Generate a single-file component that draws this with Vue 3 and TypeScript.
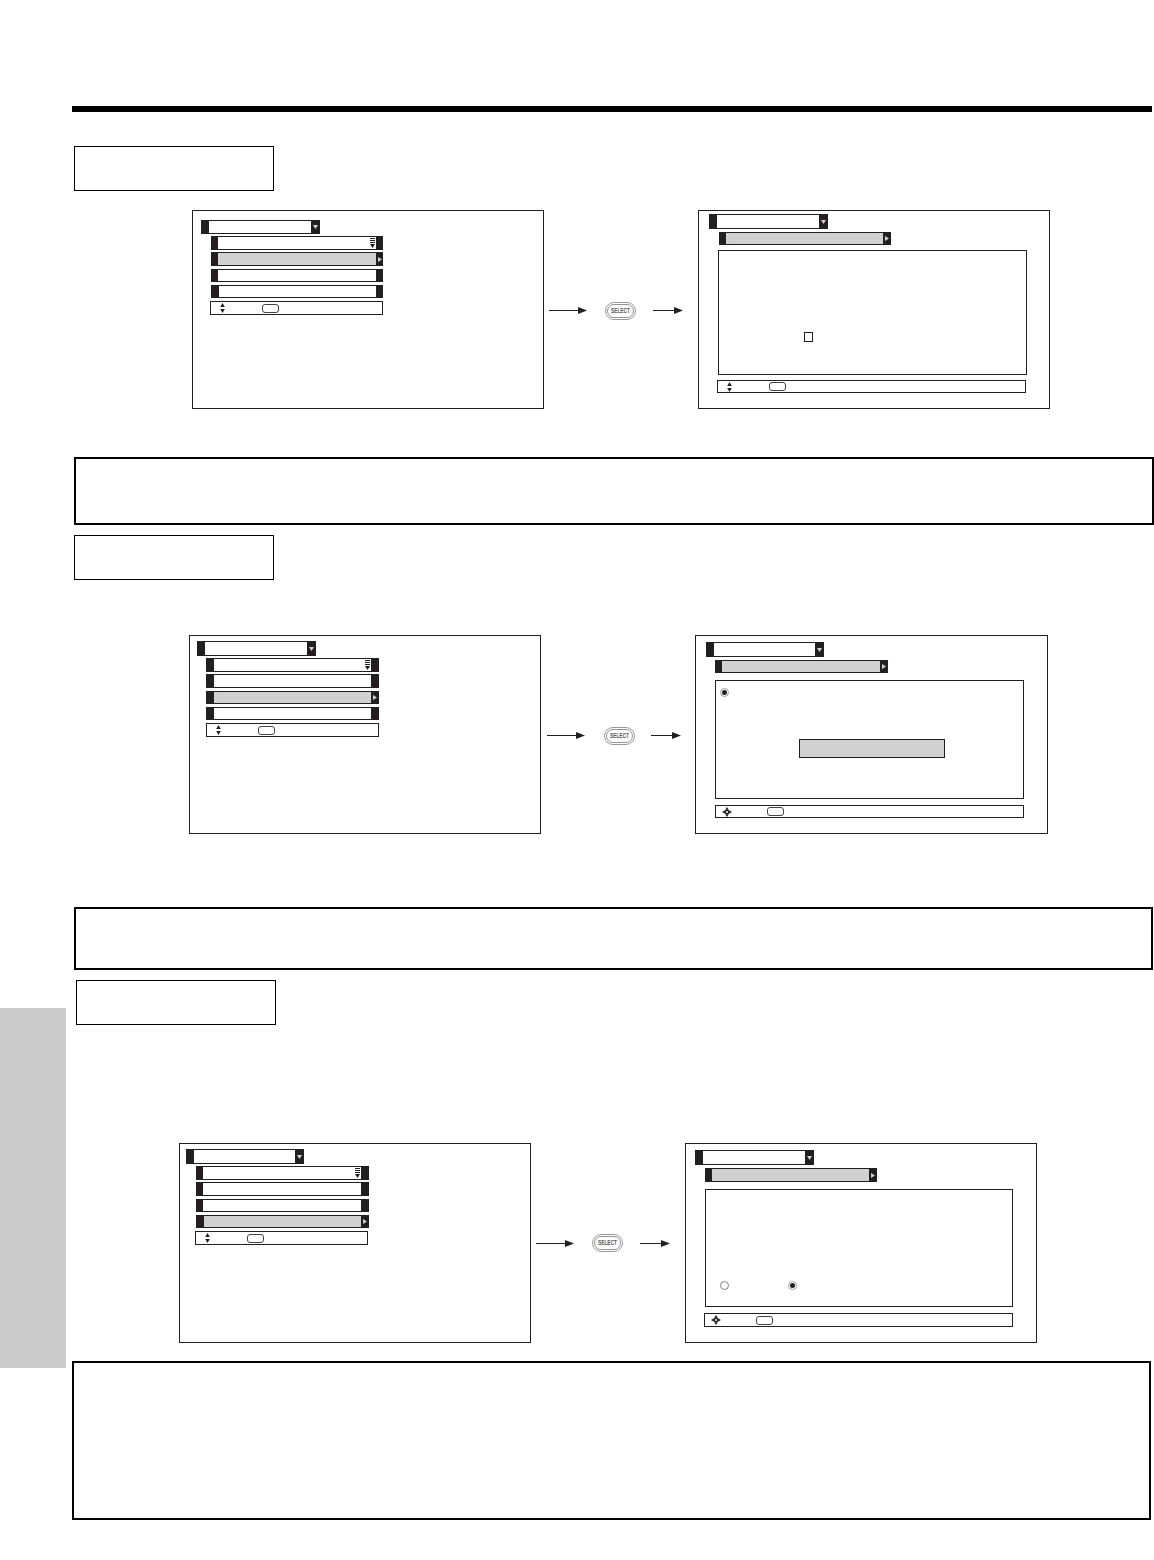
<template>
  <div class="page">
    <div class="side-tab"></div>
    <div class="rule"></div>

    <template v-for="sec in sections" :key="sec.id">
      <div class="label-box" :class="sec.id"></div>

      <div class="flow" :class="sec.id">
        <!-- menu screen -->
        <div class="screen screen-l">
          <div class="title-bar">
            <div class="title-body"></div>
            <div class="title-cap">
              <svg width="5" height="4" viewBox="0 0 5 4"><path d="M0 0H5L2.5 4Z" fill="#cfcfcf" /></svg>
            </div>
          </div>
          <div class="menu-rows">
            <div v-for="i in 4" :key="i" class="menu-row" :class="{ active: i - 1 === sec.active, last: i === 4 }">
              <div class="row-body">
                <svg v-if="i === 1" class="scroll-icon" width="5" height="10" viewBox="0 0 5 10">
                  <path d="M0 0H5V1H0ZM0 2H5V3H0ZM0 4H5V5H0ZM0 6H5L2.5 10Z" fill="#231f20" />
                </svg>
              </div>
              <div class="row-cap">
                <svg v-if="i - 1 === sec.active" width="4" height="5" viewBox="0 0 4 5"><path d="M0 0L4 2.5L0 5Z" fill="#cfcfcf" /></svg>
              </div>
            </div>
            <div class="hint-bar">
              <span class="hint-icon">
                <svg width="5" height="10" viewBox="0 0 5 10"><path d="M2.5 0L4.8 4H.2ZM.2 6H4.8L2.5 10Z" fill="#231f20" /></svg>
              </span>
              <span class="pill"></span>
            </div>
          </div>
        </div>

        <!-- arrow, SELECT, arrow -->
        <div class="connector">
          <svg class="arrow" width="38" height="7" viewBox="0 0 38 7"><path d="M0 3H29V0L38 3.5L29 7V4H0Z" fill="#231f20" /></svg>
          <svg class="select-btn" width="31" height="18" viewBox="0 0 31 18">
            <rect x=".5" y=".5" width="30" height="17" rx="8.5" fill="#fff" stroke="#9a9a9a" />
            <rect x="2.5" y="2.5" width="26" height="13" rx="6.5" fill="#fff" stroke="#777" stroke-width=".8" />
            <text x="15.5" y="11.4" text-anchor="middle" textLength="19" lengthAdjust="spacingAndGlyphs" class="select-text">SELECT</text>
          </svg>
          <svg class="arrow short" width="30" height="7" viewBox="0 0 30 7"><path d="M0 3H21V0L30 3.5L21 7V4H0Z" fill="#231f20" /></svg>
        </div>

        <!-- detail screen -->
        <div class="screen screen-r">
          <div class="title-bar">
            <div class="title-body"></div>
            <div class="title-cap">
              <svg width="5" height="4" viewBox="0 0 5 4"><path d="M0 0H5L2.5 4Z" fill="#cfcfcf" /></svg>
            </div>
          </div>
          <div class="menu-row active sub-row">
            <div class="row-body"></div>
            <div class="row-cap">
              <svg width="4" height="5" viewBox="0 0 4 5"><path d="M0 0L4 2.5L0 5Z" fill="#cfcfcf" /></svg>
            </div>
          </div>

          <div class="content-box">
            <div v-if="sec.kind === 'check'" class="check"></div>
            <template v-else-if="sec.kind === 'source'">
              <svg class="radio" width="9" height="9" viewBox="0 0 9 9">
                <circle cx="4.5" cy="4.5" r="4" fill="#fff" stroke="#777" stroke-width=".7" />
                <circle cx="4.5" cy="4.5" r="2.5" fill="#231f20" />
              </svg>
              <div class="grey-field"></div>
            </template>
            <div v-else class="radio-row">
              <svg class="radio" width="9" height="9" viewBox="0 0 9 9">
                <circle cx="4.5" cy="4.5" r="4" fill="#fff" stroke="#666" stroke-width=".8" />
              </svg>
              <svg class="radio" width="9" height="9" viewBox="0 0 9 9">
                <circle cx="4.5" cy="4.5" r="4" fill="#fff" stroke="#777" stroke-width=".7" />
                <circle cx="4.5" cy="4.5" r="2.5" fill="#231f20" />
              </svg>
            </div>
          </div>

          <div class="hint-bar">
            <span class="hint-icon">
              <svg v-if="sec.kind === 'check'" width="5" height="10" viewBox="0 0 5 10"><path d="M2.5 0L4.8 4H.2ZM.2 6H4.8L2.5 10Z" fill="#231f20" /></svg>
              <svg v-else width="10" height="10" viewBox="0 0 10 10">
                <path d="M5 0L6.8 2.8H3.2ZM5 10L3.2 7.2H6.8ZM0 5L2.8 3.2V6.8ZM10 5L7.2 6.8V3.2Z" fill="#231f20" />
                <circle cx="5" cy="5" r="2.4" fill="#231f20" />
                <circle cx="5" cy="5" r="1" fill="#fff" />
              </svg>
            </span>
            <span class="pill"></span>
          </div>
        </div>
      </div>

      <div class="notice" :class="sec.id"></div>
    </template>
  </div>
</template>

<script setup lang="ts">
interface Section {
  id: string
  active: number // highlighted row of the menu screen
  kind: 'check' | 'source' | 'radios'
}

const sections: Section[] = [
  { id: 's1', active: 1, kind: 'check' },
  { id: 's2', active: 2, kind: 'source' },
  { id: 's3', active: 3, kind: 'radios' }
]
</script>

<style>
html,
body {
  background: #fff;
}
</style>

<style scoped>
.page {
  position: relative;
  width: 1154px;
  height: 1560px;
  overflow: hidden;
  background: #fff;
  display: flow-root;
  font-family: "Liberation Sans", Arial, sans-serif;
}

.side-tab {
  position: absolute;
  left: 0;
  top: 1008px;
  width: 66px;
  height: 360px;
  background: #cbcbcb;
}

.rule {
  height: 6px;
  margin: 106px 2px 0 72px;
  background: #000;
}

/* Boxes */
.label-box {
  box-sizing: border-box;
  width: 200px;
  height: 45px;
  border: 1px solid #000;
}
.label-box.s1 { margin: 34px 0 0 74px; }
.label-box.s2 { margin: 10px 0 0 74px; }
.label-box.s3 { margin: 10px 0 0 76px; }

.notice {
  box-sizing: border-box;
  border: 2px solid #000;
}
.notice.s1 { width: 1080px; height: 68px; margin: 48px 0 0 74px; }
.notice.s2 { width: 1079px; height: 63px; margin: 73px 0 0 74px; }
.notice.s3 { width: 1079px; height: 159px; margin: 18px 0 0 72px; }

/* Screens row */
.flow {
  display: flex;
  align-items: center;
}
.flow.s1 { margin: 19px 0 0 192px; }
.flow.s2 { margin: 55px 0 0 189px; }
.flow.s3 { margin: 118px 0 0 179px; }

.screen {
  box-sizing: border-box;
  width: 352px;
  height: 199px;
  border: 1px solid #231f20;
  display: flex;
  flex-direction: column;
  align-items: flex-start;
}
.flow.s2 .screen-r { width: 353px; }
.flow.s3 .screen { height: 200px; }

.connector {
  box-sizing: border-box;
  width: 154px;
  padding: 2px 0 0 5px;
  display: flex;
  align-items: center;
  gap: 18px;
}
.flow.s2 .connector { padding-left: 6px; }
.flow.s3 .connector { padding-top: 0; }
.arrow,
.select-btn {
  display: block;
  flex: none;
}
.arrow.short { margin-left: -1px; }
.flow.s2 .select-btn { margin-left: 1px; }
.flow.s2 .arrow.short { margin-left: -2px; }
.select-text {
  font-family: "Liberation Sans", Arial, sans-serif;
  font-size: 6.5px;
  font-weight: 700;
  fill: #555;
}

/* Title bar and rows */
.title-bar {
  box-sizing: border-box;
  display: flex;
  width: 119px;
  height: 15px;
  padding-left: 8px;
  background: #231f20;
}
.title-body {
  flex: 1;
  margin: 1px 0;
  background: #fff;
}
.title-cap {
  width: 9px;
  display: flex;
  align-items: center;
  justify-content: center;
}

.screen-l .title-bar { margin: 5px 0 0 7px; }
.flow.s1 .screen-l .title-bar { height: 14px; margin: 9px 0 0 8px; }
.flow.s2 .screen-l .title-bar { margin-left: 7px; }
.flow.s3 .screen-l .title-bar { width: 118px; margin-left: 6px; }

.screen-r .title-bar { margin: 6px 0 0 10px; }
.flow.s1 .screen-r .title-bar { margin-top: 3px; }
.flow.s2 .screen-r .title-bar { width: 118px; }
.flow.s3 .screen-r .title-bar { margin-left: 9px; }

.menu-rows {
  display: flex;
  flex-direction: column;
  align-items: flex-start;
  gap: 2.75px;
  margin: 2px 0 0 16px;
}
.flow.s1 .menu-rows { margin-left: 18px; }

.menu-row {
  box-sizing: border-box;
  display: flex;
  width: 173px;
  height: 13.5px;
  padding-left: 7px;
  background: #231f20;
}
.flow.s1 .menu-row { width: 172px; }
.flow.s2 .menu-rows .menu-row { padding-left: 8px; }
.menu-row.last { padding-left: 8px; }
.row-body {
  flex: 1;
  margin: 1px 0;
  background: #fff;
  display: flex;
  justify-content: flex-end;
  align-items: center;
}
.menu-row.active .row-body { background: #d1d1d1; }
.row-cap {
  width: 7px;
  display: flex;
  align-items: center;
  justify-content: center;
}
.flow.s2 .menu-rows .row-cap,
.flow.s3 .menu-rows .row-cap { width: 8px; }
.scroll-icon {
  display: block;
  margin-right: 1px;
}

.sub-row {
  height: 13px;
  margin: 3px 0 0 20px;
}
.flow.s2 .sub-row { margin-left: 19px; }
.flow.s3 .sub-row { width: 172px; height: 14px; margin-left: 19px; }
.sub-row .row-cap { width: 8px; }

/* Hint bar */
.hint-bar {
  box-sizing: border-box;
  display: flex;
  align-items: center;
  width: 173px;
  height: 14px;
  padding-left: 6px;
  border: 1px solid #231f20;
  background: #fff;
}
.hint-icon {
  width: 10px;
  display: flex;
  justify-content: center;
}
.hint-icon svg { display: block; }
.pill {
  box-sizing: border-box;
  width: 17px;
  height: 9px;
  margin-left: 35px;
  border: 1px solid #444;
  border-radius: 3px;
}
.menu-rows .hint-bar { margin-left: -1px; }
.flow.s2 .menu-rows .hint-bar { margin-left: 0; }

.screen-r .hint-bar {
  width: 309px;
  height: 13px;
  margin: 5px 0 0 18px;
}
.flow.s2 .screen-r .hint-bar { margin: 6px 0 0 19px; }
.flow.s3 .screen-r .hint-bar { height: 14px; margin: 6px 0 0 18px; }

/* Detail box */
.content-box {
  box-sizing: border-box;
  width: 309px;
  height: 125px;
  margin: 5px 0 0 19px;
  border: 1px solid #231f20;
}
.flow.s2 .content-box { height: 119px; margin-top: 7px; }
.flow.s3 .content-box { width: 308px; height: 118px; margin-top: 7px; }

.check {
  box-sizing: border-box;
  width: 9px;
  height: 10px;
  margin: 81px 0 0 85px;
  border: 1px solid #231f20;
}
.radio { display: block; }
.content-box > .radio { margin: 7px 0 0 4px; }
.grey-field {
  box-sizing: border-box;
  width: 146px;
  height: 19px;
  margin: 42px 0 0 83px;
  border: 1px solid #231f20;
  background: #d1d1d1;
}
.radio-row {
  display: flex;
  gap: 59px;
  margin: 91px 0 0 14px;
}
</style>
